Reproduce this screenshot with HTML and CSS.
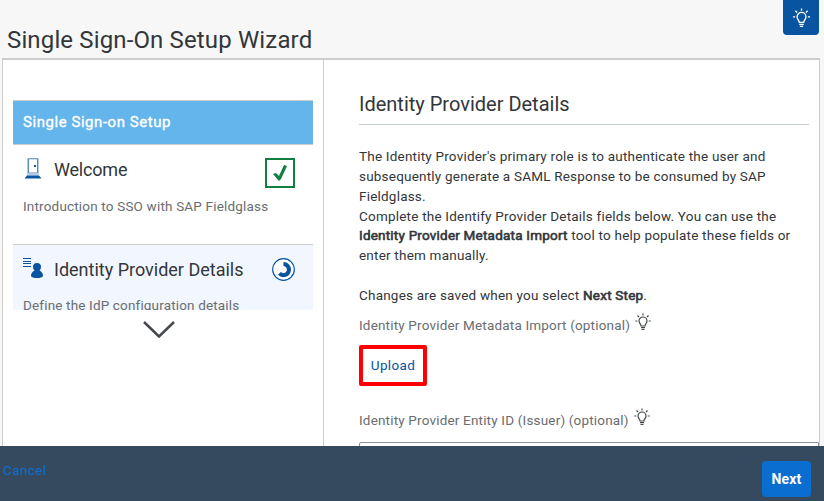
FILE: index.html
```html
<!DOCTYPE html>
<html lang="en">
<head>
<meta charset="utf-8">
<title>Single Sign-On Setup Wizard</title>
<link rel="stylesheet" href="styles.css">
</head>
<body>
<svg class="defs" width="0" height="0">
  <symbol id="bulb" viewBox="0 0 16 18">
    <path d="M6 13c0-2-2-2.700-2-5a4 4 0 0 1 8 0c0 2.300-2 3-2 5z M6 14.700h4 M6.500 16.500h3 M8 .5v2 M2.500 2.500l1.500 1.500 M13.500 2.500l-1.500 1.500 M.3 8h2 M13.700 8h2" fill="none" stroke="currentColor" stroke-width="1.200"/>
  </symbol>
</svg>
<header class="topbar">
  <h1>Single Sign-On Setup Wizard</h1>
  <button class="help" aria-label="Help"><svg width="19" height="20"><use href="#bulb"/></svg></button>
</header>
<main class="panel">
  <nav class="steps">
    <div class="list">
      <div class="banner">Single Sign-on Setup</div>
      <section class="step">
        <div class="row">
          <svg class="icon" width="22" height="22" viewBox="0 0 22 22"><path d="M4.500 17V.5h11V17" fill="#fff" stroke="#b5cae2"/><path d="M5.500 15V.8h9V15z" fill="#fff" stroke="#5b8abf"/><path d="M4 16h12v1.500H4z" fill="#b5cae2"/><path d="M11 7h2v2h-2zM4 17.500h12l2.500 3h-17z" fill="#0854a0"/></svg>
          <h2 class="welcome">Welcome</h2>
          <svg class="check" width="30" height="30" viewBox="0 0 30 30"><path d="M1 1h28v28H1z" fill="#fff" stroke="#107e3e" stroke-width="2"/><path d="M8 16l3-1 3 3 5-11 3 1-6 13-2 2z" fill="#107e3e"/></svg>
        </div>
        <p class="intro">Introduction to SSO with SAP Fieldglass</p>
      </section>
      <section class="step current">
        <div class="row">
          <svg class="icon" width="22" height="22" viewBox="0 0 22 22"><path d="M0 .5h8M0 3.500h8M0 5.500h8M0 8.500h8" stroke="#0854a0" stroke-width="1"/><path d="M10 9a4 4 0 1 1 8 0q0 2-1.500 3.500Q20 14 20 18q-1 2-6 2t-6-2q0-4 3.500-5.500Q10 11 10 9z" fill="#0854a0"/></svg>
          <h2 class="details">Identity Provider Details</h2>
          <svg class="progress" width="23" height="23" viewBox="0 0 24 24"><circle cx="12" cy="12" r="11.300" fill="#fff" stroke="#0854a0" stroke-width="1.200"/><path d="M12 6.300a5.800 5.800 0 1 1-4.300 9.800" fill="none" stroke="#0854a0" stroke-width="4.200"/></svg>
        </div>
        <p class="define">Define the IdP configuration details</p>
      </section>
    </div>
    <svg class="chevron" width="34" height="18" viewBox="0 0 34 18"><path d="M2 1l15 14.500L32 1" fill="none" stroke="#45494d" stroke-width="2.500"/></svg>
  </nav>
  <article class="content">
    <h2 class="heading"><span>Identity Provider Details</span></h2>
    <div class="copy">
      <p>The Identity Provider's primary role is to authenticate the user and<br>
      subsequently generate a SAML Response to be consumed by SAP<br>
      Fieldglass.<br>
      Complete the Identify Provider Details fields below. You can use the<br>
      <b>Identity Provider Metadata Import</b> tool to help populate these fields or<br>
      enter them manually.</p>
      <p class="saved">Changes are saved when you select <b>Next Step</b>.</p>
    </div>
    <div class="field-label"><span>Identity Provider Metadata Import (optional)</span><svg width="16" height="18"><use href="#bulb"/></svg></div>
    <button class="upload">Upload</button>
    <div class="field-label second"><span>Identity Provider Entity ID (Issuer) (optional)</span><svg width="16" height="18"><use href="#bulb"/></svg></div>
    <div class="input"></div>
  </article>
</main>
<footer class="footer"><a class="cancel">Cancel</a><button class="next">Next</button></footer>
</body>
</html>
```
FILE: styles.css
```css
* { box-sizing: border-box; }
body { margin: 0; height: 501px; overflow: hidden; background: #f7f7f7; color: #32363a; font: 13.5px/20px Roboto, "Liberation Sans", sans-serif; letter-spacing: .21px; display: flex; flex-direction: column; }
h1, h2, p { margin: 0; font-weight: 400; white-space: nowrap; }
button { border: 0; padding: 0; font: inherit; letter-spacing: inherit; }
svg { flex: none; display: block; }
.defs { position: absolute; }
.topbar { height: 58px; flex: none; display: flex; justify-content: space-between; padding: 0 5px 0 7px; }
h1 { font-size: 24px; line-height: 30px; margin-top: 25px; letter-spacing: .14px; }
.help { width: 36px; height: 35px; background: #0854a0; color: #fff; border-radius: 0 0 4px 4px; display: flex; align-items: center; justify-content: center; }
.panel { flex: none; height: 388px; margin: 0 4px 0 2px; border: 1px solid #ccc; border-width: 2px 1px 0; background: #fff; display: flex; overflow: hidden; }
.steps { width: 321px; flex: none; border-right: 1px solid #ccc; padding: 40px 10px 0; }
.list { height: 210px; overflow: hidden; }
.banner { height: 45px; background: #64b5ec; color: #fff; border: 1px solid #ccc; border-width: 1px 0; padding: 0 10px; line-height: 43px; font-size: 15px; -webkit-text-stroke: .35px; letter-spacing: .55px; }
.step { height: 99px; padding: 13px 18px 0 10px; }
.current { height: 100px; border-top: 1px solid #ccc; background: #f2f7ff; }
.row { display: flex; height: 30px; }
.row h2 { font-size: 18px; line-height: 23px; flex: 1; letter-spacing: 0; }
.row .welcome { letter-spacing: -.2px; }
.icon { margin-right: 9px; }
.step p { color: #6a6d70; margin-top: 8px; letter-spacing: .18px; }
.current p { margin-top: 8px; letter-spacing: .16px; }
.step .define { line-height: 18px; }
.chevron { margin: 11px 0 0 129px; }
.content { flex: 1; padding: 32px 10px 0 35px; min-width: 0; }
.heading { height: 33px; border-bottom: 1px solid #c4cdd0; font-size: 20px; line-height: 25px; letter-spacing: 0; }
.copy { margin-top: 22px; line-height: 19.85px; white-space: nowrap; }
.saved { margin-top: 20px; }
b { font-weight: 400; -webkit-text-stroke: .6px; }
.field-label { display: flex; color: #6a6d70; height: 20px; margin-top: 9px; white-space: nowrap; letter-spacing: .18px; }
.field-label svg { color: #45494d; margin: -2px 0 0 5px; }
.upload { display: block; width: 68px; height: 41px; border: 4px solid #f00; border-radius: 2px; background: #fff; color: #0854a0; margin-top: 10px; letter-spacing: .35px; }
.second { margin-top: 24px; }
.input { border: 1px solid #89919a; border-radius: 2px 0 0; height: 30px; margin: 12px -10px 0 0; }
.footer { height: 55px; flex: none; background: #354a5f; display: flex; justify-content: space-between; padding: 15px 13px 0 3px; }
.cancel { color: #0a6ed1; margin-top: -1px; letter-spacing: .4px; }
.next { width: 49px; height: 36px; border-radius: 4px; background: #0a6ed1; color: #fff; font-weight: 700; font-size: 14px; }
```
